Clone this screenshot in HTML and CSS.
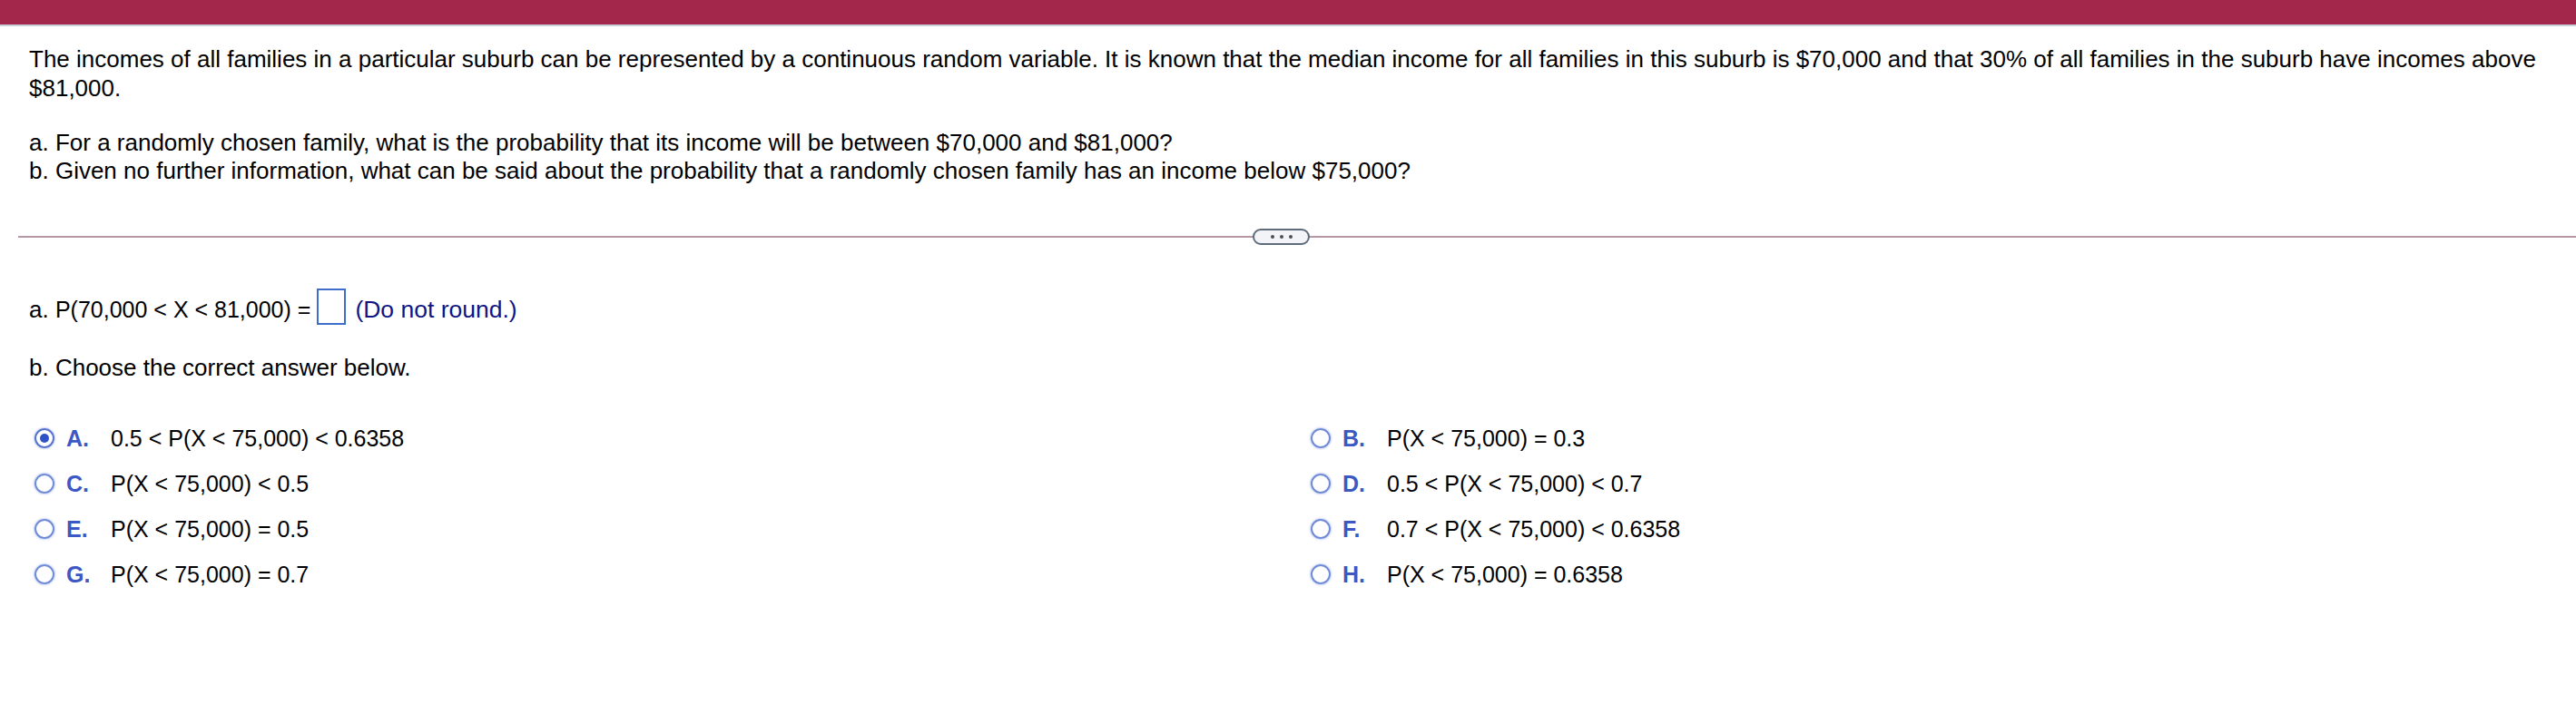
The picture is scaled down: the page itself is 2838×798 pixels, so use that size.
FILE: index.html
```html
<!DOCTYPE html>
<html lang="en">
<head>
<meta charset="utf-8">
<title>Question</title>
<link rel="stylesheet" href="styles.css">
</head>
<body>
<header class="topbar"></header>
<main class="content">
  <section class="question">
    <p class="intro">The incomes of all families in a particular suburb can be represented by a continuous random variable. It is known that the median income for all families in this suburb is $70,000 and that 30% of all families in the suburb have incomes above $81,000.</p>
    <p class="parts">a. For a randomly chosen family, what is the probability that its income will be between $70,000 and $81,000?<br>b. Given no further information, what can be said about the probability that a randomly chosen family has an income below $75,000?</p>
  </section>
  <div class="divider">
    <button class="more" type="button" aria-label="More"><span class="dot"></span><span class="dot"></span><span class="dot"></span></button>
  </div>
  <section class="answers">
    <p class="part-a"><span class="prose">a. </span>P(70,000 &lt; X &lt; 81,000) =<span class="answer-box"></span><span class="hint">(Do not round.)</span></p>
    <p class="part-b">b. Choose the correct answer below.</p>
    <ul class="choices">
      <li class="choice"><span class="radio checked"></span><span class="letter">A.</span><span class="expr">0.5 &lt; P(X &lt; 75,000) &lt; 0.6358</span></li>
      <li class="choice"><span class="radio"></span><span class="letter">B.</span><span class="expr">P(X &lt; 75,000) = 0.3</span></li>
      <li class="choice"><span class="radio"></span><span class="letter">C.</span><span class="expr">P(X &lt; 75,000) &lt; 0.5</span></li>
      <li class="choice"><span class="radio"></span><span class="letter">D.</span><span class="expr">0.5 &lt; P(X &lt; 75,000) &lt; 0.7</span></li>
      <li class="choice"><span class="radio"></span><span class="letter">E.</span><span class="expr">P(X &lt; 75,000) = 0.5</span></li>
      <li class="choice"><span class="radio"></span><span class="letter">F.</span><span class="expr">0.7 &lt; P(X &lt; 75,000) &lt; 0.6358</span></li>
      <li class="choice"><span class="radio"></span><span class="letter">G.</span><span class="expr">P(X &lt; 75,000) = 0.7</span></li>
      <li class="choice"><span class="radio"></span><span class="letter">H.</span><span class="expr">P(X &lt; 75,000) = 0.6358</span></li>
    </ul>
  </section>
</main>
</body>
</html>
```
FILE: styles.css
```css
* { box-sizing: border-box; }
html, body { margin: 0; padding: 0; background: #ffffff; }
body {
  font-family: "Liberation Sans", Arial, sans-serif;
  font-size: 25px;
  color: #000000;
}
.topbar {
  height: 29px;
  background: #a3264b;
  border-bottom: 2px solid #c9d0dc;
}
.content { padding: 0; }
.question { padding: 20px 20px 0 32px; }
.question p { margin: 0; }
.intro { font-size: 26px; line-height: 32px; }
.parts { font-size: 26px; line-height: 31px; margin-top: 29px !important; }

.divider {
  position: relative;
  margin: 56px 0 0 20px;
  height: 2px;
  background: #b896a6;
}
.more {
  position: absolute;
  left: 1360px;
  top: -8px;
  width: 63px;
  height: 18px;
  padding: 0;
  border: 2px solid #5f6b7a;
  border-radius: 9px;
  background: #f2f4f7;
  display: flex;
  align-items: center;
  justify-content: center;
  gap: 6px;
}
.dot {
  width: 4px;
  height: 4px;
  border-radius: 50%;
  background: #4a4f57;
}

.answers { padding: 0 0 0 32px; }
.answers p { margin: 0; line-height: 32px; }
.part-a { margin-top: 56px !important; }
.prose { font-size: 26px; }
.answer-box {
  display: inline-block;
  width: 32px;
  height: 40px;
  margin: 0 10px 0 7px;
  border: 2px solid #3f6dcc;
  vertical-align: -8px;
}
.hint { color: #101585; font-size: 26.5px; }
.part-b { font-size: 26px; margin-top: 31px !important; }

.choices {
  list-style: none;
  margin: 37px 0 0 0;
  padding: 0 0 0 6px;
  display: grid;
  grid-template-columns: 1406px 1fr;
  grid-auto-rows: 50px;
}
.choice {
  display: flex;
  align-items: center;
  line-height: 50px;
}
.radio {
  width: 22px;
  height: 22px;
  border-radius: 50%;
  border: 2px solid #6f8bd8;
  box-shadow: 0 0 2px 1px rgba(111, 139, 216, 0.35);
  display: flex;
  align-items: center;
  justify-content: center;
  flex: none;
}
.radio.checked { border-color: #5673d0; }
.radio.checked::after {
  content: "";
  width: 10px;
  height: 10px;
  border-radius: 50%;
  background: #2f53c4;
}
.letter {
  width: 49px;
  margin-left: 13px;
  font-weight: bold;
  color: #3b58c4;
}
.expr { color: #000000; }
```
